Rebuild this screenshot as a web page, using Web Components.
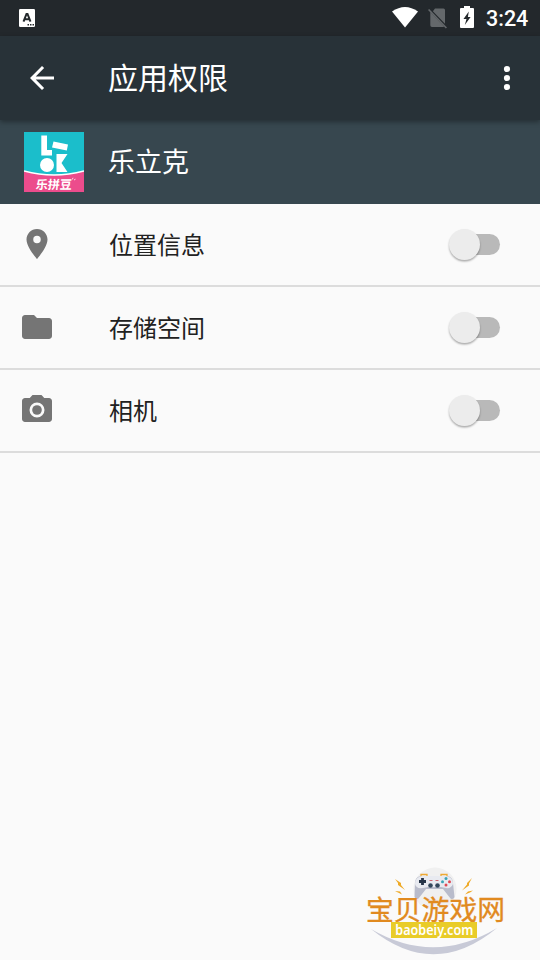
<!DOCTYPE html>
<html lang="zh-CN">
<head>
<meta charset="utf-8">
<title>应用权限</title>
<style>
html,body{margin:0;height:100%}
body{background:#fafafa;overflow:hidden}
</style>
</head>
<body>
<permission-screen></permission-screen>
<script>
function define(name, html) {
  const t = document.createElement('template');
  t.innerHTML = html;
  customElements.define(name, class extends HTMLElement {
    constructor() {
      super();
      this.attachShadow({ mode: 'open' }).append(t.content.cloneNode(true));
    }
  });
}

define('status-bar', `
<style>
:host{display:flex;align-items:center;height:36px;background:#23282c;box-sizing:border-box;padding:0 12px 0 19px;color:#fff}
svg{display:block;flex:none}
.gap{flex:1}
.wifi{margin:0 10px 2px 0}.sim{margin:0 13px 0 0}.bat{margin:0 12px 2px 0}
.time{font:500 21.5px/38px Roboto,sans-serif;width:42px;white-space:nowrap;height:36px}
</style>
<svg width="16" height="18" viewBox="0 0 16 18"><rect width="16" height="18" rx="1.2" fill="#fff"/><path d="M4.500 12.700 7.500 5h1l3 7.700M5.700 10.300h4.600" fill="none" stroke="#23282c" stroke-width="2"/><path d="M8.500 15h1.500v1.500H8.500zM11 15h1.500v1.500H11zM13.500 15H15v1.500h-1.500z" fill="#23282c"/></svg>
<span class="gap"></span>
<svg class="wifi" width="26" height="21" viewBox="0 0 26 21"><path d="M0 4.500Q13-4.500 26 4.500L13 20.500z" fill="#fff"/></svg>
<svg class="sim" width="19" height="21" viewBox="0 0 19 21"><path d="M7 .5H15.500q1.500 0 1.500 1.500v13.800L4.900 3.200zM2.300 4 16 18.500 15.500 19H4q-1.700 0-1.700-1.700z" fill="#64686b"/><path d="M.6 1.500 18.400 20" stroke="#64686b" stroke-width="1.600"/></svg>
<svg class="bat" width="14" height="22" viewBox="0 0 14 22"><path d="M1 2h3V0h6v2h3q1 0 1 1v18q0 1-1 1H1q-1 0-1-1V3q0-1 1-1z" fill="#fff"/><path d="M8.800 5.500 3.500 13h3L4.800 19 10.600 11H7.900z" fill="#23282c"/></svg>
<span class="time">3:24</span>`);

define('app-toolbar', `
<style>
:host{display:flex;align-items:center;height:84px;background:#283238;color:#fff;position:relative;box-shadow:0 2px 5px rgba(0,0,0,.35);box-sizing:border-box;padding:0 9px 0 24px}
svg{display:block;flex:none}
.title{flex:1;margin:0 0 4px 48px;font:400 30px/44px "Noto Sans CJK SC",sans-serif}
</style>
<svg width="36" height="36" viewBox="0 0 24 24"><path d="M20 11H7.830l5.590-5.590L12 4l-8 8 8 8 1.410-1.410L7.830 13H20z" fill="#fff"/></svg>
<span class="title"><slot></slot></span>
<svg width="48" height="36" viewBox="0 0 48 36"><g fill="#fff"><circle cx="24" cy="9" r="3.100"/><circle cx="24" cy="18" r="3.100"/><circle cx="24" cy="27" r="3.100"/></g></svg>`);

define('app-logo', `
<style>
:host{display:block;width:60px;height:60px;position:relative;overflow:hidden}
svg{display:block}
span{position:absolute;left:0;right:0;top:44px;text-align:center;font:700 12px/15px "Noto Sans CJK SC",sans-serif;color:#fff}
span{transform:skewX(-5deg)}
</style>
<svg width="60" height="60" viewBox="0 0 60 60"><path fill="#1bbecb" d="M0 0h60v60H0z"/><path fill="#ec4c8c" d="M0 39Q30 47 60 39V60H0z"/><path d="M0 39Q30 47 60 39" fill="none" stroke="#fff" stroke-width="1.300"/>
<g fill="#fff"><path d="M17.300 3.500h5.700v14.500h5v5.500H17.300zM29.500 9.500 44 12.500l-1.200 6L28 15.500z"/><path d="M32.500 22H43.500L37.500 31l6 9H32.500z"/><circle cx="23" cy="33" r="7"/></g><path d="M48.300 47.500 49 45.800M50 48l1.500-.8" stroke="#fff" stroke-width=".8"/></svg><span>乐拼豆</span>`);

define('app-header', `
<style>
:host{display:flex;align-items:center;height:84px;background:#37474f;color:#fff;padding-left:24px;gap:24px}
.name{margin-bottom:2px;font:400 27px/40px "Noto Sans CJK SC",sans-serif}
</style><app-logo></app-logo><span class="name"><slot></slot></span>`);

define('toggle-switch', `
<style>
:host{display:flex;align-items:center;width:51px;height:32px}
.thumb{width:31px;height:31px;border-radius:50%;background:#ececec;box-shadow:0 1.500px 2px rgba(0,0,0,.32);z-index:1}
.track{width:36px;height:21px;border-radius:11px;background:#b9b9b9;margin-left:-16px}
</style><div class="thumb"></div><div class="track"></div>`);

define('permission-row', `
<style>
:host{display:flex;align-items:center;height:83px;box-sizing:border-box;border-bottom:2px solid #dcdcdc;padding:0 40px 0 19px;color:#212121}
.label{flex:1;margin:0 0 2px 54px;font:400 24px/36px "Noto Sans CJK SC",sans-serif}
::slotted(svg){display:block;flex:none;width:36px;height:36px;fill:#757575;margin-top:-1px}
</style><slot name="icon"></slot><span class="label"><slot></slot></span><toggle-switch></toggle-switch>`);

define('site-watermark', `
<style>
:host{display:block;position:absolute;left:355px;top:860px;width:160px;height:100px}
svg{position:absolute;inset:0}
.cn{position:absolute;left:11px;top:34px;font:400 27.800px/28px "Noto Sans CJK SC",sans-serif;color:#e18a1f;white-space:nowrap;-webkit-text-stroke:.3px #e18a1f}
.url{position:absolute;left:36px;top:62px;width:86px;height:16px;background:#e9cc28;color:#fff;font:600 14px/15px "Noto Sans",sans-serif;display:flex;justify-content:center}
.url span{transform:scaleX(.9)}
</style>
<svg width="160" height="100" viewBox="0 0 160 100">
<circle cx="80" cy="29" r="21.500" fill="#f0f0f0"/>
<path d="M16 69Q79 120 142 68Q79 106 16 69z" fill="#c8cad7"/>
<path d="M66 16.500V14.500h6v2M86 16.500V14.500h6v2" fill="none" stroke="#eda934" stroke-width="1.300"/>
<path d="M66 16Q60 17 60 23L59.500 37q1 3 4 1.500L71 29h17l7.500 9.500q3 1.500 4-1.500L98 23Q98 17 92 16z" fill="#b9bccb"/>
<path d="M67 16H91Q98 17 98 24 96 29 91 28l-5-1H73l-5 1Q61 29 60 24q0-7 7-8z" fill="#e8eaf0"/>
<path d="M67.500 18v7M64 21.500h7" stroke="#263448" stroke-width="2.800"/>
<g fill="#33475b"><circle cx="75.500" cy="25.500" r="2.300"/><circle cx="82.500" cy="25.500" r="2.300"/></g><path d="M74.500 20.500h3M80.500 20.500h3" stroke="#cf6670"/>
<g fill="#df4a55"><circle cx="91" cy="25" r="1.500"/><circle cx="94.500" cy="21.700" r="1.500"/></g><g fill="#3aa3b7"><circle cx="87.500" cy="21.700" r="1.500"/><circle cx="91" cy="18.500" r="1.500"/></g>
<g fill="#efaa27"><path d="M40 19l6 4v2l4 5-7-5v-2zM40 31l5 .5 2 3-4-2z"/><path d="M117 18l-5 5v1.500l-5 6 7-5v-2zM118 30.500l-5 1-3 3 5-2z"/></g>
</svg><span class="cn">宝贝游戏网</span><span class="url"><span>baobeiy.com</span></span>`);

define('permission-screen', `
<style>:host{display:flex;flex-direction:column;width:540px;height:960px;position:relative;background:#fafafa;overflow:hidden}</style>
<status-bar></status-bar>
<app-toolbar>应用权限</app-toolbar>
<app-header>乐立克</app-header>
<permission-row><svg slot="icon" viewBox="0 0 24 24"><path d="M12 2C8.130 2 5 5.130 5 9c0 5.250 7 13 7 13s7-7.750 7-13c0-3.870-3.130-7-7-7zm0 9.500a2.500 2.500 0 1 1 0-5 2.500 2.500 0 0 1 0 5z"/></svg>位置信息</permission-row>
<permission-row><svg slot="icon" viewBox="0 0 24 24"><path d="M10 4H4c-1.100 0-1.990.9-1.990 2L2 18c0 1.100.9 2 2 2h16c1.100 0 2-.9 2-2V8c0-1.100-.9-2-2-2h-8z"/></svg>存储空间</permission-row>
<permission-row><svg slot="icon" viewBox="0 0 24 24"><circle cx="12" cy="12" r="3.200"/><path d="M9 2 7.170 4H4c-1.100 0-2 .9-2 2v12c0 1.100.9 2 2 2h16c1.100 0 2-.9 2-2V6c0-1.100-.9-2-2-2h-3.170L15 2zm3 15a5 5 0 1 1 0-10 5 5 0 0 1 0 10z"/></svg>相机</permission-row>
<site-watermark></site-watermark>`);
</script>
</body>
</html>
